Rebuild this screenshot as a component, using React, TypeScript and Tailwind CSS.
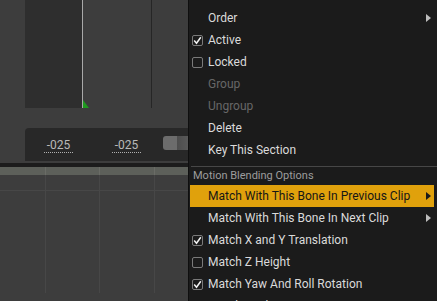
import type { ReactNode } from "react";

type Item = {
  label: string;
  check?: boolean;
  disabled?: boolean;
  sub?: boolean;
  active?: boolean;
};

const top: Item[] = [
  { label: "Order", sub: true },
  { label: "Active", check: true },
  { label: "Locked", check: false },
  { label: "Group", disabled: true },
  { label: "Ungroup", disabled: true },
  { label: "Delete" },
  { label: "Key This Section" },
];

const blending: Item[] = [
  { label: "Match With This Bone In Previous Clip", sub: true, active: true },
  { label: "Match With This Bone In Next Clip", sub: true },
  { label: "Match X and Y Translation", check: true },
  { label: "Match Z Height", check: false },
  { label: "Match Yaw And Roll Rotation", check: true },
  { label: "Match Pitch Rotation", check: false },
];

function CheckBox({ on }: { on: boolean }) {
  return (
    <span className="w-[11px] h-[11px] rounded-[2px] border border-[#7a7a7a] flex items-center justify-center">
      {on && (
        <svg width="9" height="9" viewBox="0 0 9 9">
          <path d="M1.2 4.6 L3.5 7.2 L7.8 1.2" fill="none" stroke="#f2f2f2" strokeWidth="1.5" />
        </svg>
      )}
    </span>
  );
}

function Arrow({ dark }: { dark?: boolean }) {
  return (
    <svg width="5" height="8" viewBox="0 0 5 8" className="mr-[3px]">
      <path d="M0 0 L5 4 L0 8 Z" fill={dark ? "#1a1a1a" : "#bdbdbd"} />
    </svg>
  );
}

function MenuRow({ item }: { item: Item }) {
  const color = item.active ? "text-[#161616]" : item.disabled ? "text-[#676767]" : "text-[#dadada]";
  return (
    <div className={`h-[22px] flex items-center pl-[2px] mr-[3px] ${item.active ? "bg-[#e0a10c]" : ""}`}>
      <span className="w-[16px] flex items-center">
        {item.check !== undefined && <CheckBox on={item.check} />}
      </span>
      <span className={`flex-1 text-[12px] whitespace-nowrap ${color}`}>{item.label}</span>
      {item.sub && <Arrow dark={item.active} />}
    </div>
  );
}

function Grid({ children }: { children?: ReactNode }) {
  return <div className="relative">{children}</div>;
}

export default function App() {
  return (
    <div
      className="relative w-[437px] h-[301px] overflow-hidden bg-[#3d3d3d]"
      style={{ fontFamily: "Roboto, 'Liberation Sans', sans-serif" }}
    >
      {/* track area */}
      <div className="flex h-[108px]">
        <div className="w-[25px]" />
        <div className="w-[57px] bg-[#2e2e2e]" />
        <div className="relative w-[1px] bg-[#a9a9a9]">
          <svg width="6" height="8" viewBox="0 0 6 8" className="absolute left-[1px] bottom-0">
            <path d="M0 0 L6 8 L0 8 Z" fill="#1f9a1f" />
          </svg>
        </div>
        <div className="w-[68px]" />
        <div className="w-[1px] bg-[#262626]" />
      </div>

      <div className="h-[20px]" />

      {/* value bar */}
      <div className="ml-[25px] h-[33px] bg-[#282828] rounded-tl-[4px] flex items-center text-[#b9b9b9] text-[12px]">
        <span className="ml-[19px] w-[29px] text-center border-b border-dotted border-[#b0b0b0] leading-[14px] mt-[2px]">-025</span>
        <span className="ml-[39px] w-[29px] text-center border-b border-dotted border-[#b0b0b0] leading-[14px] mt-[2px]">-025</span>
        <div className="ml-[22px] flex h-[14px] -mt-[3px]">
          <div className="w-[14px] bg-[#6c6c6c] rounded-l-[3px]" />
          <div className="w-[12px] bg-gradient-to-r from-[#4d4d4d] to-[#5a5a5a]" />
        </div>
      </div>

      <div className="h-[2px]" />
      <div className="h-[4px] bg-[#1c1c1c]" />

      {/* time ruler + grid */}
      <Grid>
        <svg width="190" height="126" className="block">
          <rect x="0" y="0" width="190" height="8" fill="#5d605a" />
          <rect x="0" y="8" width="190" height="118" fill="#3d3d3d" />
          <line x1="0" y1="23.5" x2="190" y2="23.5" stroke="#474747" />
          {[45.5, 99.5, 154.5].map(x => (
            <g key={x}>
              <line x1={x} y1="0" x2={x} y2="8" stroke="#6a6c66" />
              <line x1={x} y1="8" x2={x} y2="126" stroke="#474747" />
            </g>
          ))}
        </svg>
      </Grid>

      {/* context menu */}
      <div className="absolute left-[188px] top-0 w-[249px] h-[301px] bg-[#1b1b1b] border-l border-[#0f0f0f] pl-[1px] pt-[7px]">
        {top.map(i => <MenuRow key={i.label} item={i} />)}
        <div className="mt-[5px] ml-[1px] h-[1px] bg-[#474747]" />
        <div className="h-[18px] flex items-center pl-[3px] text-[11px] text-[#9d9d9d]">Motion Blending Options</div>
        {blending.map(i => <MenuRow key={i.label} item={i} />)}
      </div>
    </div>
  );
}
